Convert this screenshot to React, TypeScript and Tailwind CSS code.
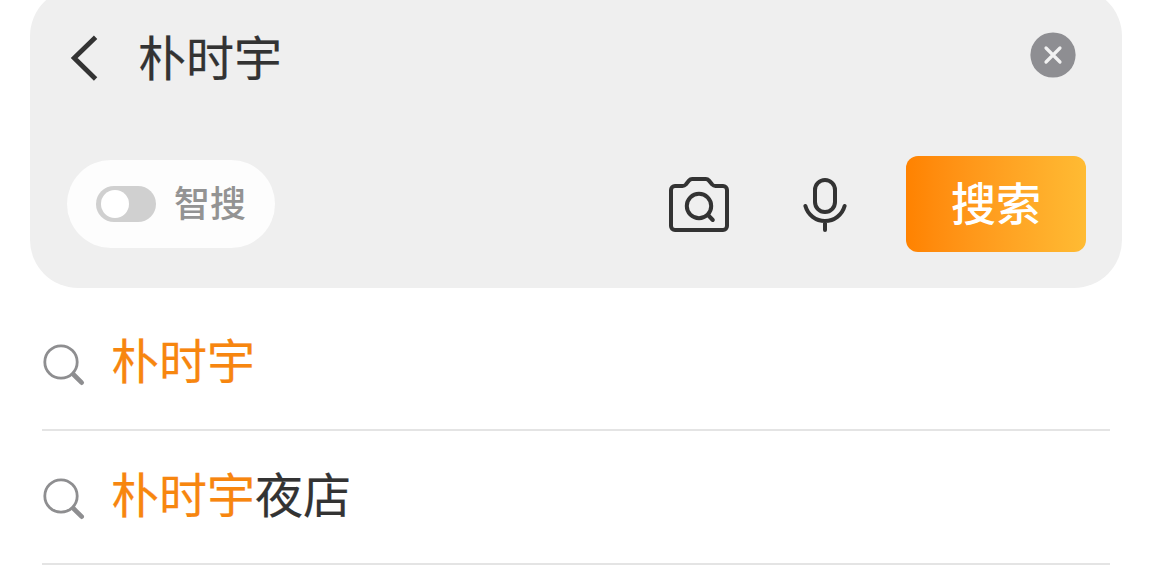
const suggestions = [
  { id: 1, match: "朴时宇", rest: "" },
  { id: 2, match: "朴时宇", rest: "夜店" },
];

function BackIcon() {
  return (
    <svg width="28" height="48" viewBox="0 0 28 48" fill="none" stroke="#333333" strokeWidth="4.8">
      <path d="M25.600 3.200 4.200 24l21.400 21" />
    </svg>
  );
}

function ClearIcon() {
  return (
    <svg width="46" height="46" viewBox="0 0 46 46" fill="none">
      <circle cx="23" cy="23" r="22.6" fill="#8e8e92" />
      <path d="m16 16 14 14M30 16 16 30" stroke="#f2f2f2" strokeWidth="3.2" strokeLinecap="round" />
    </svg>
  );
}

function CameraSearchIcon() {
  return (
    <svg
      width="60"
      height="56"
      viewBox="0 0 60 56"
      fill="none"
      stroke="#333333"
      strokeWidth="4"
      strokeLinecap="round"
      strokeLinejoin="round"
    >
      <path d="M2 13a4 4 0 0 1 4-4h7.5c1.5 0 2.400-.5 3.300-1.500L20 3.600C21 2.400 21.800 2 23.200 2h13.600c1.400 0 2.200.4 3.200 1.600l3.200 3.900C44.100 8.500 45 9 46.500 9H54a4 4 0 0 1 4 4v36a4 4 0 0 1-4 4H6a4 4 0 0 1-4-4z" />
      <circle cx="30" cy="29" r="12.200" />
      <path d="m39 38 4.800 5" />
    </svg>
  );
}

function MicIcon() {
  return (
    <svg
      width="44"
      height="56"
      viewBox="0 0 44 56"
      fill="none"
      stroke="#333333"
      strokeWidth="4"
      strokeLinecap="round"
    >
      <rect x="12" y="3" width="20" height="32" rx="10" />
      <path d="M2.400 29a20.300 20.300 0 0 0 39.200 0M22 44.500V53" />
    </svg>
  );
}

function SearchIcon() {
  return (
    <svg width="44" height="44" viewBox="0 0 44 44" fill="none" stroke="#8e8e90" strokeLinecap="round">
      <circle cx="19" cy="19" r="16.200" strokeWidth="2.800" />
      <path d="m31.500 31.500 8.200 8.200" strokeWidth="4.600" />
    </svg>
  );
}

function SearchPanel() {
  return (
    <div className="mx-[30px] -mt-3 h-[300px] rounded-[48px] bg-[#efefef] pt-3">
      <div className="flex h-[116px] items-center pl-10 pr-[46px]">
        <button aria-label="返回">
          <BackIcon />
        </button>
        <span className="mb-[7px] ml-10 text-[48px] leading-none text-[#333333] [-webkit-text-stroke:0.2px_#333333]">
          朴时宇
        </span>
        <button className="mb-[6px] ml-auto" aria-label="清除">
          <ClearIcon />
        </button>
      </div>

      <div className="mt-10 flex h-24 items-center pl-[37px] pr-9">
        <button className="flex h-[88px] w-[208px] items-center rounded-full bg-[#fdfdfd] pl-[29px]">
          <span className="flex h-9 w-[60px] items-center rounded-full bg-[#d0d0d0] pl-[5px]">
            <span className="size-7 rounded-full bg-white" />
          </span>
          <span className="mb-[6px] ml-[18px] text-[36px] font-medium leading-none text-[#939393]">智搜</span>
        </button>

        <div className="ml-auto flex items-center">
          <button className="mt-[2px]" aria-label="拍照搜索">
            <CameraSearchIcon />
          </button>
          <button className="ml-[74px] mt-[2px]" aria-label="语音搜索">
            <MicIcon />
          </button>
          <button className="ml-[59px] h-24 w-[180px] rounded-xl bg-linear-to-r from-[#ff8200] to-[#ffbb33] pb-1.5 text-[45px] font-medium leading-none text-white">
            搜索
          </button>
        </div>
      </div>
    </div>
  );
}

export default function App() {
  return (
    <div className="h-[580px] w-[1152px] overflow-hidden bg-white font-['Noto_Sans_CJK_SC',sans-serif]">
      <SearchPanel />

      {/* Suggestions */}
      <ul className="mx-[42px] pt-[9px]">
        {suggestions.map((item) => (
          <li key={item.id} className="flex h-[134px] items-center border-b-2 border-[#e4e4e4]">
            <span className="mt-[3px]">
              <SearchIcon />
            </span>
            <span className="mb-[10px] ml-[25px] text-[48px] leading-none text-[#333333] [-webkit-text-stroke:0.2px_currentColor]">
              <span className="text-[#f7860f] [-webkit-text-stroke:0.2px_currentColor]">{item.match}</span>
              {item.rest}
            </span>
          </li>
        ))}
      </ul>
    </div>
  );
}
